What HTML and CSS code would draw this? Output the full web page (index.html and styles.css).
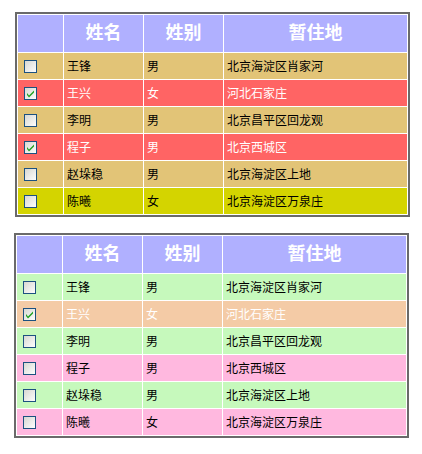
FILE: index.html
```html
<!DOCTYPE html>
<html>
<head>
<meta charset="utf-8">
<link rel="stylesheet" href="styles.css">
</head>
<body>
<svg width="0" height="0" class="defs">
  <defs>
    <linearGradient id="cbg" x1="0" y1="0" x2="1" y2="1">
      <stop offset="0" stop-color="#d6d6d0"/>
      <stop offset="1" stop-color="#ffffff"/>
    </linearGradient>
    <symbol id="box" viewBox="0 0 13 13">
      <rect x="0.5" y="0.5" width="12" height="12" fill="url(#cbg)" stroke="#1c5180"/>
    </symbol>
    <symbol id="boxc" viewBox="0 0 13 13">
      <rect x="0.5" y="0.5" width="12" height="12" fill="url(#cbg)" stroke="#1c5180"/>
      <path d="M3 6 L5 8.5 L10 3.5 L10 5.5 L5 10.5 L3 8 Z" fill="#21a121"/>
    </symbol>
  </defs>
</svg>

<table class="grid grid-a">
  <colgroup><col class="c1"><col class="c2"><col class="c3"><col class="c4"></colgroup>
  <tr class="head"><th></th><th>姓名</th><th>姓别</th><th>暂住地</th></tr>
  <tr class="tan"><td><svg class="cb"><use href="#box"/></svg></td><td>王锋</td><td>男</td><td>北京海淀区肖家河</td></tr>
  <tr class="red sel"><td><svg class="cb"><use href="#boxc"/></svg></td><td>王兴</td><td>女</td><td>河北石家庄</td></tr>
  <tr class="tan"><td><svg class="cb"><use href="#box"/></svg></td><td>李明</td><td>男</td><td>北京昌平区回龙观</td></tr>
  <tr class="red sel"><td><svg class="cb"><use href="#boxc"/></svg></td><td>程子</td><td>男</td><td>北京西城区</td></tr>
  <tr class="tan"><td><svg class="cb"><use href="#box"/></svg></td><td>赵垛稳</td><td>男</td><td>北京海淀区上地</td></tr>
  <tr class="yel"><td><svg class="cb"><use href="#box"/></svg></td><td>陈曦</td><td>女</td><td>北京海淀区万泉庄</td></tr>
</table>

<table class="grid grid-b">
  <colgroup><col class="c1"><col class="c2"><col class="c3"><col class="c4"></colgroup>
  <tr class="head"><th></th><th>姓名</th><th>姓别</th><th>暂住地</th></tr>
  <tr class="grn"><td><svg class="cb"><use href="#box"/></svg></td><td>王锋</td><td>男</td><td>北京海淀区肖家河</td></tr>
  <tr class="peach sel"><td><svg class="cb"><use href="#boxc"/></svg></td><td>王兴</td><td>女</td><td>河北石家庄</td></tr>
  <tr class="grn"><td><svg class="cb"><use href="#box"/></svg></td><td>李明</td><td>男</td><td>北京昌平区回龙观</td></tr>
  <tr class="pink"><td><svg class="cb"><use href="#box"/></svg></td><td>程子</td><td>男</td><td>北京西城区</td></tr>
  <tr class="grn"><td><svg class="cb"><use href="#box"/></svg></td><td>赵垛稳</td><td>男</td><td>北京海淀区上地</td></tr>
  <tr class="pink"><td><svg class="cb"><use href="#box"/></svg></td><td>陈曦</td><td>女</td><td>北京海淀区万泉庄</td></tr>
</table>
</body>
</html>
```

FILE: styles.css
```css
html, body {
  margin: 0;
  padding: 0;
  background: #ffffff;
}
body {
  font-family: "Noto Sans CJK SC", "DejaVu Sans", sans-serif;
  font-size: 12px;
  color: #000;
}
.defs {
  position: absolute;
  width: 0;
  height: 0;
}
.grid {
  border-collapse: separate;
  border-spacing: 1px;
  border: 2px solid #6a6a6a;
  background: #ffffff;
  table-layout: fixed;
  width: 395px;
}
.grid-a {
  margin: 12px 0 0 15px;
}
.grid-b {
  margin: 16px 0 0 14px;
}
.c1 { width: 45px; }
.c2 { width: 79px; }
.c3 { width: 79px; }
.c4 { width: 183px; }
.grid th,
.grid td {
  padding: 0;
  overflow: hidden;
  white-space: nowrap;
}
.head th {
  height: 37px;
  background: #b0b0ff;
  color: #ffffff;
  font-size: 18px;
  font-weight: bold;
  text-align: center;
  line-height: 32px;
  vertical-align: top;
  padding-top: 0;
}
.grid td {
  height: 26px;
  line-height: 26px;
  vertical-align: middle;
  text-align: left;
  padding-left: 3px;
}
.grid td:first-child {
  padding-left: 6px;
}
.cb {
  display: block;
  width: 13px;
  height: 13px;
}
.tan td { background: #e2c477; }
.red td { background: #ff6464; }
.yel td { background: #d4d400; }
.grn td { background: #c6f9bc; }
.peach td { background: #f4cba6; }
.pink td { background: #ffb8df; }
.sel td { color: #ffffff; }
```
